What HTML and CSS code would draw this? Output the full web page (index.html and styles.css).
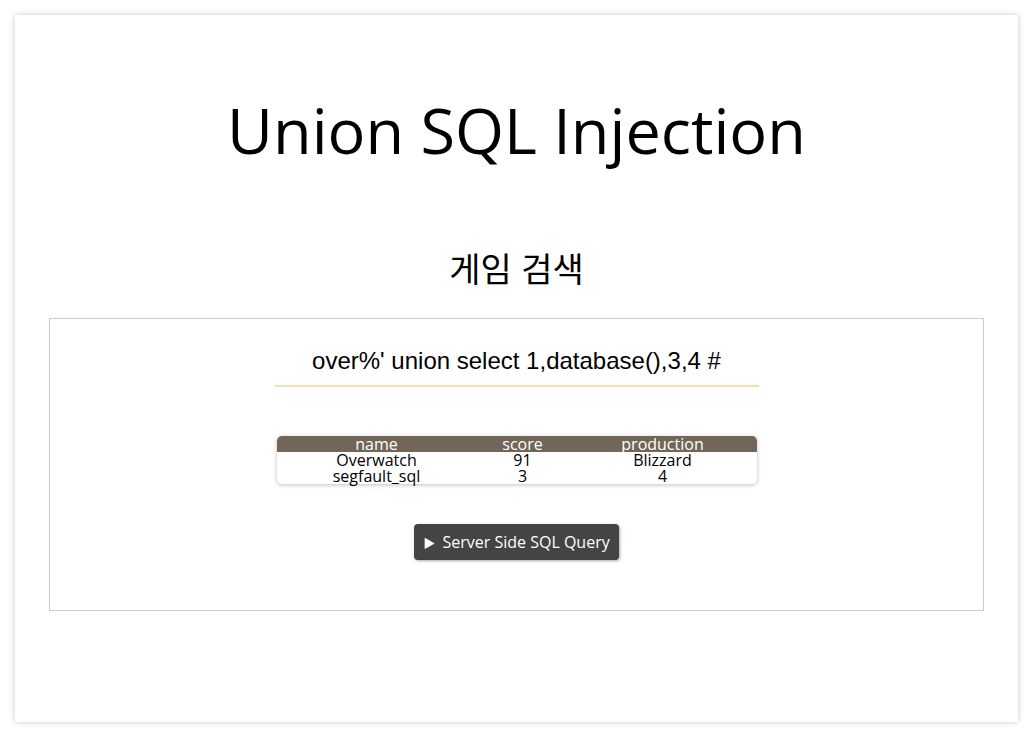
FILE: index.html
```html
<!DOCTYPE html>
<html lang="ko">
<head>
<meta charset="utf-8">
<title>Union SQL Injection</title>
<link rel="stylesheet" href="styles.css">
</head>
<body>
<div class="card">
  <h1 class="title">Union SQL Injection</h1>
  <h2 class="subtitle">게임 검색</h2>
  <div class="panel">
    <input class="search" type="text" value="over%' union select 1,database(),3,4 #">
    <table class="results">
      <thead>
        <tr><th class="c-name">name</th><th class="c-score">score</th><th class="c-prod">production</th></tr>
      </thead>
      <tbody>
        <tr><td>Overwatch</td><td>91</td><td>Blizzard</td></tr>
        <tr><td>segfault_sql</td><td>3</td><td>4</td></tr>
      </tbody>
    </table>
    <button class="query-btn" type="button"><span class="tri">&#9654;</span> Server Side SQL Query</button>
  </div>
</div>
</body>
</html>
```

FILE: styles.css
```css
html, body {
  margin: 0;
  padding: 0;
  background: #ffffff;
}
body {
  padding: 15px;
  font-family: "Open Sans", "Noto Sans CJK KR", sans-serif;
  color: #000;
}
.card {
  box-sizing: border-box;
  height: 707px;
  padding: 73px 34px 0;
  background: #fff;
  box-shadow: 0 0 6px rgba(0, 0, 0, 0.22);
  display: flex;
  flex-direction: column;
  align-items: stretch;
}
.title {
  margin: 0;
  font-size: 63px;
  font-weight: 400;
  line-height: 84px;
  text-align: center;
}
.subtitle {
  margin: 74px 0 0;
  font-family: "Noto Sans CJK KR", sans-serif;
  font-size: 34px;
  font-weight: 400;
  line-height: 44px;
  text-align: center;
}
.panel {
  margin-top: 28px;
  box-sizing: border-box;
  height: 293px;
  border: 1px solid #cccccc;
  display: flex;
  flex-direction: column;
  align-items: center;
  padding-top: 17px;
}
.search {
  box-sizing: border-box;
  width: 484px;
  height: 51px;
  border: none;
  border-bottom: 2px solid #f5deb3;
  outline: none;
  text-align: center;
  font-family: "Liberation Sans", Arial, sans-serif;
  font-size: 24px;
  color: #000;
  padding: 0;
  background: transparent;
}
.results {
  margin-top: 49px;
  width: 480px;
  border-collapse: separate;
  border-spacing: 0;
  border-radius: 5px;
  box-shadow: 0 1px 4px rgba(0, 0, 0, 0.25);
  font-size: 16px;
  line-height: 16px;
  text-align: center;
  background: #fff;
}
.results th {
  background: #726658;
  color: #fff;
  font-weight: 400;
  padding: 0;
  height: 16px;
}
.results th:first-child { border-top-left-radius: 5px; }
.results th:last-child { border-top-right-radius: 5px; }
.results td {
  padding: 0;
  height: 16px;
}
.c-name { width: 200px; }
.c-score { width: 92px; }
.c-prod { width: 188px; }
.query-btn {
  margin-top: 40px;
  height: 36px;
  padding: 0 9px;
  border: none;
  border-radius: 4px;
  background: #444444;
  color: #fff;
  font-family: "Open Sans", "Noto Sans CJK KR", sans-serif;
  font-size: 16px;
  box-shadow: 1px 1px 3px rgba(0, 0, 0, 0.35);
  cursor: pointer;
}
.tri {
  font-size: 12px;
  margin-right: 3px;
}
```
